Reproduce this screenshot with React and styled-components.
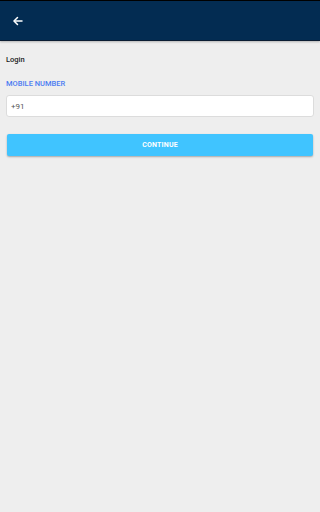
import React, { useState } from 'react';
import styled, { createGlobalStyle } from 'styled-components';

const GlobalStyle = createGlobalStyle`
  html, body {
    margin: 0;
    padding: 0;
    background: #eeeeee;
    font-family: Roboto, 'Noto Sans', sans-serif;
  }
  * {
    box-sizing: border-box;
  }
`;

const Page = styled.div`
  width: 100%;
  min-height: 512px;
  background: #eeeeee;
  display: flex;
  flex-direction: column;
`;

const Header = styled.div`
  height: 41px;
  background: #032c52;
  border-top: 1px solid #000;
  border-bottom: 1px solid #0b1d33;
  box-shadow: 0 1px 2px rgba(0, 0, 0, 0.25);
  display: flex;
  align-items: center;
  padding-left: 11px;
`;

const BackButton = styled.button`
  width: 14px;
  height: 14px;
  padding: 0;
  border: none;
  background: none;
  color: #fff;
  display: flex;
  align-items: center;
  justify-content: center;
  cursor: pointer;
  svg {
    width: 12px;
    height: 12px;
  }
`;

const Content = styled.div`
  padding: 14px 6px 0 6px;
  display: flex;
  flex-direction: column;
`;

const Title = styled.div`
  font-size: 7.5px;
  font-weight: 500;
  color: #222;
  line-height: 10px;
`;

const Label = styled.label`
  margin-top: 14px;
  font-size: 7.5px;
  font-weight: 500;
  color: #4c7cf2;
  line-height: 10px;
`;

const Input = styled.input`
  margin-top: 6px;
  height: 22px;
  width: 100%;
  border: 1px solid #dcdcdc;
  border-radius: 3px;
  background: #fff;
  padding: 0 4px;
  font-family: Roboto, sans-serif;
  font-size: 8px;
  color: #555;
  outline: none;
`;

const Button = styled.button`
  margin: 17px 1px 0 1px;
  height: 22px;
  border: none;
  border-radius: 2px;
  background: #40c4ff;
  color: #fff;
  font-family: Roboto, sans-serif;
  font-size: 7px;
  font-weight: 700;
  letter-spacing: 0.2px;
  box-shadow: 0 1px 2px rgba(0, 0, 0, 0.3);
  cursor: pointer;
`;

const App = () => {
  const [phone, setPhone] = useState('+91');
  return (
    <>
      <GlobalStyle />
      <Page>
        <Header>
          <BackButton aria-label="back">
            <svg viewBox="0 0 24 24" fill="none" stroke="currentColor" strokeWidth="3" strokeLinecap="round" strokeLinejoin="round">
              <path d="M20 12H5" />
              <path d="M11 5l-7 7 7 7" />
            </svg>
          </BackButton>
        </Header>
        <Content>
          <Title>Login</Title>
          <Label>MOBILE NUMBER</Label>
          <Input value={phone} onChange={(e) => setPhone(e.target.value)} />
          <Button>CONTINUE</Button>
        </Content>
      </Page>
    </>
  );
};

export default App;
